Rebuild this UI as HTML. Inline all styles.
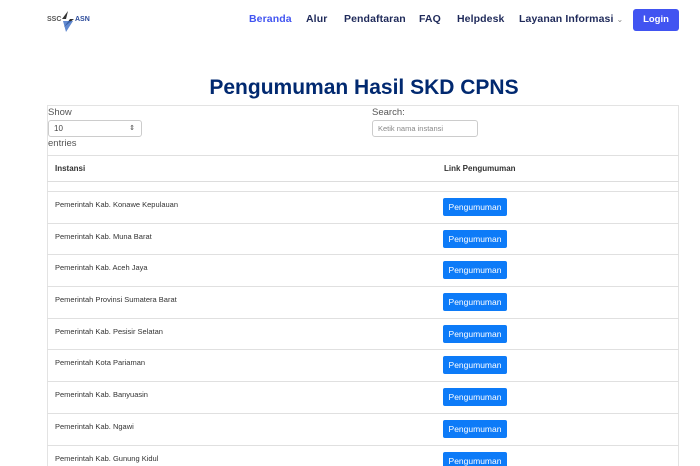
<!DOCTYPE html>
<html><head><meta charset="utf-8"><style>
*{margin:0;padding:0;box-sizing:border-box}
html,body{width:700px;height:466px;overflow:hidden}
body{background:#fff;font-family:"Liberation Sans",sans-serif;position:relative;color:#212529}
.a{position:absolute}
.nav{font-size:10.5px;font-weight:bold;color:#1f2a5a;top:13px;letter-spacing:.1px}
.login{left:633px;top:9px;width:46px;height:22px;background:#4154f1;border-radius:3px;color:#fff;font-size:9.5px;font-weight:bold;text-align:center;line-height:22px}
h1{position:absolute;left:0;width:728px;text-align:center;top:76px;font-size:21px;color:#012970;font-weight:bold}
.box{left:47px;top:105px;width:632px;height:361px;border:1px solid #e3e3e3;border-bottom:none}
.lbl{font-size:9.5px;color:#555}
.row{position:absolute;left:47px;width:632px;border-top:1px solid #e0e0e0}
.row .t{position:absolute;left:8px;top:8px;font-size:7.5px;color:#333}
.btn{position:absolute;left:396px;top:6px;width:64px;height:18px;background:#0d7bf8;border-radius:2px;color:#fff;font-size:8.5px;text-align:center;line-height:18px}
</style></head><body>
<div class="a" style="left:47px;top:16px;font-size:7px;font-weight:bold;color:#555">SSC</div>
<svg class="a" style="left:60px;top:11px" width="16" height="22" viewBox="0 0 16 22"><path d="M8 0 L2 8 L10 8 L4 16 L14 8 L6 8 Z" fill="#333"/><path d="M3 10 L13 10 L6 21 Z" fill="#3a6bc4" opacity=".8"/></svg>
<div class="a" style="left:75px;top:16px;font-size:7px;font-weight:bold;color:#2a4a9a">ASN</div>
<div class="a nav" style="left:249px;color:#4154f1">Beranda</div>
<div class="a nav" style="left:306px">Alur</div>
<div class="a nav" style="left:344px">Pendaftaran</div>
<div class="a nav" style="left:419px">FAQ</div>
<div class="a nav" style="left:457px">Helpdesk</div>
<div class="a nav" style="left:519px">Layanan Informasi <span style="font-weight:normal;font-size:8px;color:#888">&#8964;</span></div>
<div class="a login">Login</div>
<h1>Pengumuman Hasil SKD CPNS</h1>
<div class="a box"></div>
<div class="a lbl" style="left:48px;top:107px">Show</div>
<div class="a" style="left:48px;top:120px;width:94px;height:17px;border:1px solid #ccc;border-radius:3px;font-size:8px;padding:3px 5px;color:#444">10<span style="position:absolute;right:6px;font-size:7px">&#8661;</span></div>
<div class="a lbl" style="left:48px;top:138px">entries</div>
<div class="a lbl" style="left:372px;top:107px">Search:</div>
<div class="a" style="left:372px;top:120px;width:106px;height:17px;border:1px solid #ccc;border-radius:3px;font-size:7.5px;padding:3px 5px;color:#888">Ketik nama instansi</div>
<div class="row" style="top:155px;height:27px;border-bottom:1px solid #ddd"><div class="t" style="top:8px;font-weight:bold;font-size:8px">Instansi</div><div class="t" style="left:397px;top:8px;font-weight:bold;font-size:8px">Link Pengumuman</div></div>
<div class="row" style="top:191px;height:32px"><div class="t">Pemerintah Kab. Konawe Kepulauan</div><div class="btn">Pengumuman</div></div>
<div class="row" style="top:223px;height:32px"><div class="t">Pemerintah Kab. Muna Barat</div><div class="btn">Pengumuman</div></div>
<div class="row" style="top:254px;height:32px"><div class="t">Pemerintah Kab. Aceh Jaya</div><div class="btn">Pengumuman</div></div>
<div class="row" style="top:286px;height:32px"><div class="t">Pemerintah Provinsi Sumatera Barat</div><div class="btn">Pengumuman</div></div>
<div class="row" style="top:318px;height:32px"><div class="t">Pemerintah Kab. Pesisir Selatan</div><div class="btn">Pengumuman</div></div>
<div class="row" style="top:349px;height:32px"><div class="t">Pemerintah Kota Pariaman</div><div class="btn">Pengumuman</div></div>
<div class="row" style="top:381px;height:32px"><div class="t">Pemerintah Kab. Banyuasin</div><div class="btn">Pengumuman</div></div>
<div class="row" style="top:413px;height:32px"><div class="t">Pemerintah Kab. Ngawi</div><div class="btn">Pengumuman</div></div>
<div class="row" style="top:445px;height:21px;overflow:hidden"><div class="t">Pemerintah Kab. Gunung Kidul</div><div class="btn">Pengumuman</div></div>
</body></html>
